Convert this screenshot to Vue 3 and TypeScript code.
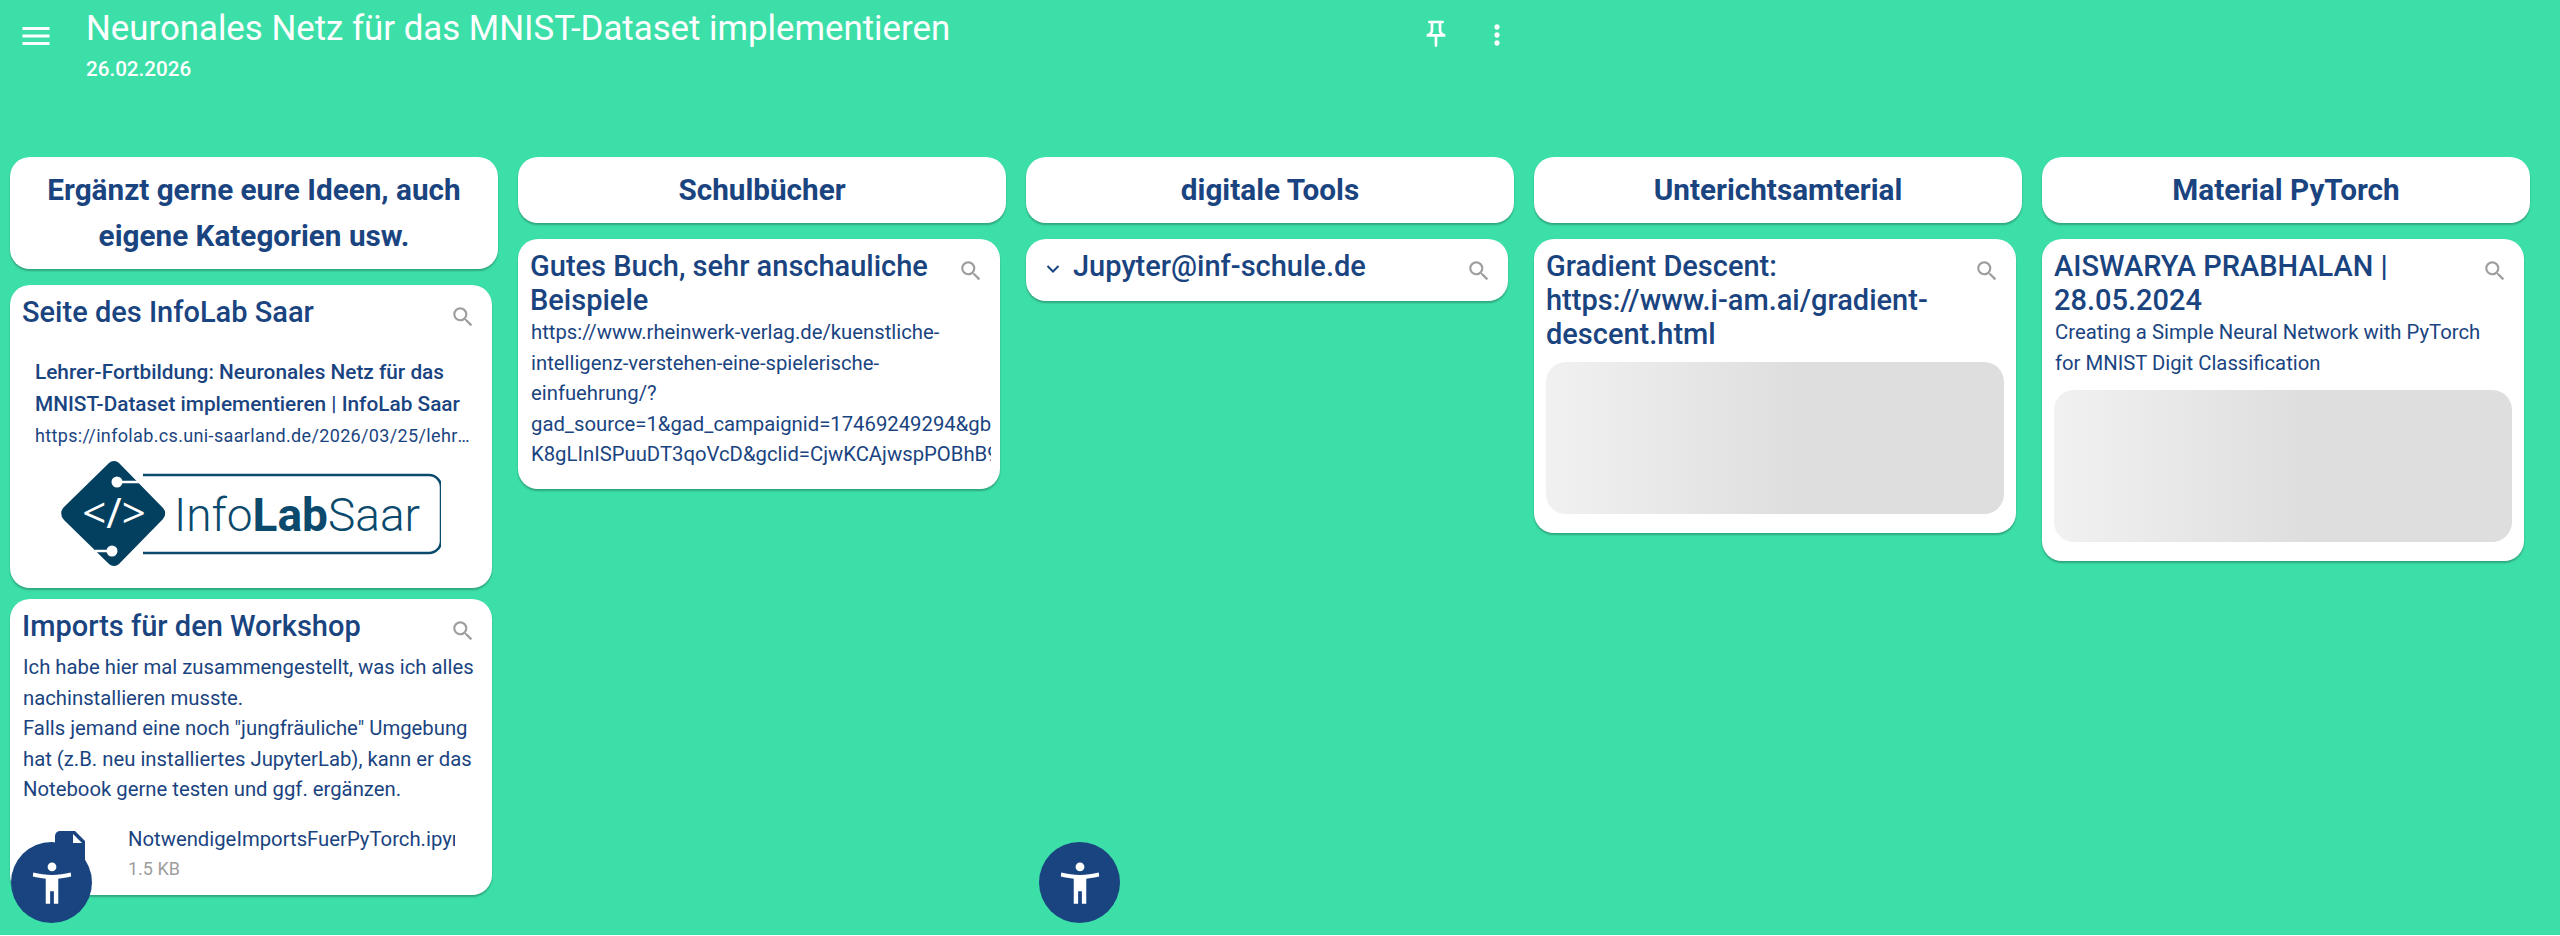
<script setup lang="ts">
const searchPath = 'M15.5 14h-.79l-.28-.27A6.47 6.47 0 0 0 16 9.5 6.5 6.5 0 1 0 9.5 16c1.61 0 3.09-.59 4.23-1.57l.27.28v.79l5 4.99L20.49 19l-4.99-5zm-6 0C7.01 14 5 11.99 5 9.5S7.01 5 9.5 5 14 7.01 14 9.5 11.99 14 9.5 14z'
const a11yPath = 'M12 2.2a2.1 2.1 0 1 1 0 4.2 2.1 2.1 0 0 1 0-4.2zM3 7c3 .8 6 1.1 9 1.1S18 7.8 21 7l.2 1.9c-2 .5-4.2.8-6.2 1V22h-2.1v-6h-1.8v6H9V9.9c-2-.2-4.200-.5-6.200-1z'
</script>

<template>
  <div class="page">
    <header class="topbar">
      <svg class="menu" viewBox="0 0 24 24"><path d="M3 18h18v-2H3v2zm0-5h18v-2H3v2zm0-7v2h18V6H3z" /></svg>
      <div class="heading">
        <h1>Neuronales Netz für das MNIST-Dataset implementieren</h1>
        <p>26.02.2026</p>
      </div>
      <svg class="pin" viewBox="0 0 24 24"><path d="M14 4v5c0 1.12.37 2.16 1 3H9c.65-.86 1-1.9 1-3V4h4m3-2H7c-.55 0-1 .45-1 1s.45 1 1 1h1v5c0 1.66-1.34 3-3 3v2h5.970v7l1 1 1-1v-7H19v-2c-1.660 0-3-1.340-3-3V4h1c.55 0 1-.45 1-1s-.45-1-1-1z" /></svg>
      <svg class="more" viewBox="0 0 24 24"><path d="M12 8c1.100 0 2-.9 2-2s-.9-2-2-2-2 .9-2 2 .9 2 2 2zm0 2c-1.100 0-2 .9-2 2s.9 2 2 2 2-.9 2-2-.9-2-2-2zm0 6c-1.100 0-2 .9-2 2s.9 2 2 2 2-.9 2-2-.9-2-2-2z" /></svg>
    </header>

    <main class="board">
      <section class="column">
        <h2 class="col-title">Ergänzt gerne eure Ideen, auch eigene Kategorien usw.</h2>
        <article class="card">
          <h3>Seite des InfoLab Saar</h3>
          <svg class="search" viewBox="0 0 24 24"><path :d="searchPath" /></svg>
          <div class="link">
            <div class="link-title">Lehrer-Fortbildung: Neuronales Netz für das MNIST-Dataset implementieren | InfoLab Saar</div>
            <div class="link-url">https://infolab.cs.uni-saarland.de/2026/03/25/lehrer-fortbildung-neuronales-netz</div>
          </div>
          <svg class="logo" viewBox="0 0 380 108">
            <path d="M82 15 H368 a12 12 0 0 1 12 12 V81 a12 12 0 0 1 -12 12 H82" fill="none" stroke="#0b4a6c" stroke-width="2.500" />
            <path d="M53 1 a7 7 0 0 1 5 2 L102 48 a8 8 0 0 1 0 11 L58 104 a7 7 0 0 1 -10 0 L3 60 a9 9 0 0 1 0 -13 L48 3 a7 7 0 0 1 5 -2 z" fill="#03405f" />
            <path d="M58 22 H80 M52 91 H34" stroke="#fff" stroke-width="2.500" fill="none" />
            <circle cx="56" cy="22" r="5.500" fill="#fff" />
            <circle cx="51" cy="91" r="5.500" fill="#fff" />
            <text x="53" y="68" class="code" text-anchor="middle">&lt;/&gt;</text>
            <text x="113" y="71" class="brand">Info<tspan class="brand-bold">Lab</tspan>Saar</text>
          </svg>
        </article>
        <article class="card">
          <h3>Imports für den Workshop</h3>
          <svg class="search" viewBox="0 0 24 24"><path :d="searchPath" /></svg>
          <p class="text spaced">Ich habe hier mal zusammengestellt, was ich alles nachinstallieren musste.<br />Falls jemand eine noch "jungfräuliche" Umgebung hat (z.B. neu installiertes JupyterLab), kann er das Notebook gerne testen und ggf. ergänzen.</p>
          <div class="file">
            <svg class="file-icon" viewBox="0 0 30 38"><path d="M5 0 H20 L30 10 V38 H0 V5 a5 5 0 0 1 5 -5 z" fill="#1a4480" /><path d="M18 3 L27 12 H18 z" fill="#fff" /></svg>
            <div class="file-info">
              <div class="file-name">NotwendigeImportsFuerPyTorch.ipynb</div>
              <div class="file-size">1.5 KB</div>
            </div>
          </div>
        </article>
      </section>

      <section class="column">
        <h2 class="col-title">Schulbücher</h2>
        <article class="card">
          <h3>Gutes Buch, sehr anschauliche Beispiele</h3>
          <svg class="search" viewBox="0 0 24 24"><path :d="searchPath" /></svg>
          <p class="text url">https://www.rheinwerk-verlag.de/kuenstliche-intelligenz-verstehen-eine-spielerische-einfuehrung/?<br /><span class="nowrap">gad_source=1&amp;gad_campaignid=17469249294&amp;gbraid=0AAAAAD</span><br /><span class="nowrap">K8gLInISPuuDT3qoVcD&amp;gclid=CjwKCAjwspPOBhB9EiwATFbi5</span></p>
        </article>
      </section>

      <section class="column">
        <h2 class="col-title">digitale Tools</h2>
        <article class="card compact">
          <svg class="chevron" viewBox="0 0 14 8"><path d="M1.500 1 L7 6.500 L12.500 1" /></svg>
          <h3 class="indented">Jupyter@inf-schule.de</h3>
          <svg class="search" viewBox="0 0 24 24"><path :d="searchPath" /></svg>
        </article>
      </section>

      <section class="column">
        <h2 class="col-title">Unterichtsamterial</h2>
        <article class="card">
          <h3>Gradient Descent: https://www.i-am.ai/gradient-descent.html</h3>
          <svg class="search" viewBox="0 0 24 24"><path :d="searchPath" /></svg>
          <div class="skeleton first"></div>
        </article>
      </section>

      <section class="column">
        <h2 class="col-title">Material PyTorch</h2>
        <article class="card">
          <h3>AISWARYA PRABHALAN | 28.05.2024</h3>
          <svg class="search" viewBox="0 0 24 24"><path :d="searchPath" /></svg>
          <p class="text narrow">Creating a Simple Neural Network with PyTorch for MNIST Digit Classification</p>
          <div class="skeleton last"></div>
        </article>
      </section>
    </main>

    <button class="a11y left" aria-label="Barrierefreiheit"><svg viewBox="0 0 24 24"><path :d="a11yPath" /></svg></button>
    <button class="a11y center" aria-label="Barrierefreiheit"><svg viewBox="0 0 24 24"><path :d="a11yPath" /></svg></button>
  </div>
</template>

<style>
html, body { margin: 0; background: #fff; overflow: hidden; }
</style>

<style scoped>
.page {
  position: relative;
  height: 935px;
  overflow: hidden;
  background: #3ddfa8;
  color: #1a4480;
  font-family: Roboto, "Noto Sans", sans-serif;
}
.topbar {
  display: flex;
  align-items: flex-start;
  width: 1513px;
  height: 157px;
  box-sizing: border-box;
  color: #fff;
  fill: #fff;
}
.menu { width: 36px; height: 36px; margin: 18px 0 0 18px; fill: #fff; flex: none; }
.heading { flex: 1; margin-left: 32px; }
h1 { margin: 7px 0 0; font-size: 34.800px; font-weight: 400; line-height: 42px; white-space: nowrap; }
.heading p { margin: 7px 0 0; font-size: 20.600px; font-weight: 500; line-height: 26px; }
.pin { width: 32px; height: 32px; margin: 18px 29px 0 0; fill: #fff; flex: none; }
.more { width: 32px; height: 32px; margin-top: 19px; fill: #fff; flex: none; }

.board { display: flex; gap: 20px; padding-left: 10px; align-items: flex-start; }
.column { width: 488px; flex: none; display: flex; flex-direction: column; align-items: flex-start; }
.col-title {
  width: 488px;
  box-sizing: border-box;
  margin: 0 0 16px;
  padding: 10px 32px;
  background: #fff;
  border-radius: 20px;
  box-shadow: 0 2px 2px rgba(0, 0, 0, .25);
  font-size: 29.700px;
  font-weight: 700;
  line-height: 46px;
  text-align: center;
}
.card {
  position: relative;
  width: 482px;
  box-sizing: border-box;
  margin-bottom: 11px;
  padding: 10px 12px 12px;
  background: #fff;
  border-radius: 20px;
  box-shadow: 0 2px 2px rgba(0, 0, 0, .25);
  overflow: hidden;
}
h3 {
  margin: 0;
  padding: 0 50px 0 0;
  font-size: 29px;
  font-weight: 500;
  line-height: 34px;
}
.search { position: absolute; top: 19px; right: 16px; width: 26px; height: 26px; fill: #9e9e9e; }
.text { margin: 0; padding: 0 0 0 1px; font-size: 20.300px; line-height: 30.500px; }
.spaced { margin-top: 9px; }
.narrow { padding-right: 12px; }
.url { height: 153px; overflow: hidden; margin: 0 -3px 7px 0; }
.nowrap { white-space: nowrap; }
.link { margin-top: 27px; padding: 0 0 0 13px; }
.link-title { font-size: 20.800px; font-weight: 500; line-height: 32px; }
.link-url {
  width: 436px;
  margin-top: 1px;
  font-size: 18px;
  line-height: 30px;
  letter-spacing: .35px;
  white-space: nowrap;
  overflow: hidden;
  text-overflow: ellipsis;
}
.logo { display: block; width: 380px; height: 108px; margin: 9px 0 8px 39px; }
.code { font-family: "Open Sans", sans-serif; font-weight: 400; font-size: 42px; fill: #fff; }
.brand { font-family: Roboto, sans-serif; font-weight: 300; font-size: 46px; fill: #0b4a6c; }
.brand-bold { font-weight: 700; }
.file { display: flex; align-items: flex-start; margin-top: 19px; padding-left: 33px; }
.file-icon { width: 30px; height: 38px; flex: none; margin-top: 7px; }
.file-info { margin-left: 43px; width: 327px; overflow: hidden; }
.file-name { font-size: 20.300px; line-height: 30px; white-space: nowrap; }
.file-size { font-size: 18px; line-height: 29px; color: #9e9e9e; }
.compact { height: 62px; }
.indented { padding-left: 35px; }
.chevron { position: absolute; left: 20px; top: 26px; width: 14px; height: 8px; fill: none; stroke: #1a4480; stroke-width: 2; }
.skeleton {
  height: 152px;
  margin-top: 12px;
  border-radius: 20px;
  background: linear-gradient(90deg, #f1f1f1 0%, #dedede 55%, #dedede 100%);
}
.skeleton.first { margin-top: 11px; margin-bottom: 7px; }
.skeleton.last { margin-bottom: 7px; }
.a11y {
  position: absolute;
  top: 842px;
  width: 81px;
  height: 81px;
  padding: 0;
  border: 0;
  border-radius: 50%;
  background: #1a4480;
  display: flex;
  align-items: center;
  justify-content: center;
}
.a11y svg { width: 50px; height: 50px; fill: #fff; }
.a11y.left { left: 11px; }
.a11y.center { left: 1039px; }
</style>
